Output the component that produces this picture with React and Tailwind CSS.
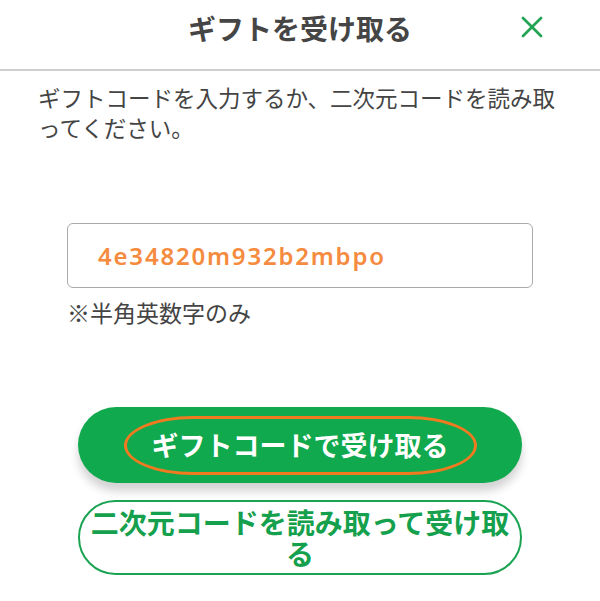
import { X } from 'lucide-react'

const jp = { fontFamily: '"Noto Sans CJK JP", "Noto Sans", sans-serif' }

export default function App() {
  return (
    <div className="h-[601px] w-[600px] overflow-hidden bg-white" style={jp}>
      <header className="grid h-[71px] grid-cols-[1fr_auto_1fr] items-start border-b-2 border-[#cfcfcf] pt-[9px]">
        <div />
        <h1 className="text-[28px] font-bold leading-[38px] text-[#454545]">ギフトを受け取る</h1>
        <div className="flex justify-end pr-[50px]">
          <button type="button" className="text-[#23a455]">
            <X className="h-[36px] w-[36px]" strokeWidth={1.8} />
          </button>
        </div>
      </header>

      <p className="px-[38px] pt-[11px] text-[22.5px] leading-[30px] text-[#444]">
        ギフトコードを入力するか、二次元コードを読み取ってください。
      </p>

      <div className="mt-[81px] px-[67px]">
        <div className="flex h-[65px] items-center rounded-[6px] border border-[#aaa] pl-[30px]">
          <span
            className="text-[24px] font-semibold tracking-[1.8px] text-[#f58b3e]"
            style={{ fontFamily: '"Noto Sans", sans-serif' }}
          >
            4e34820m932b2mbpo
          </span>
        </div>
        <p className="mt-[9px] text-[23px] leading-[30px] text-[#444]">※半角英数字のみ</p>
      </div>

      <div className="mt-[80px] flex flex-col gap-[17px] px-[78px]">
        <button
          type="button"
          className="flex h-[76px] items-center justify-center rounded-full bg-[#10a94e] shadow-[0_8px_10px_rgba(0,0,0,0.18)]"
        >
          <span className="flex h-[59px] w-[353px] items-center justify-center rounded-[70px/30px] border-[3px] border-[#f07a20] text-[27px] font-bold text-white">
            ギフトコードで受け取る
          </span>
        </button>
        <button
          type="button"
          className="flex h-[75px] items-center justify-center rounded-full border-2 border-[#1aa352] bg-white px-[8px] text-[28px] font-bold leading-[31px] text-[#14a04c]"
        >
          二次元コードを読み取って受け取る
        </button>
      </div>
    </div>
  )
}
